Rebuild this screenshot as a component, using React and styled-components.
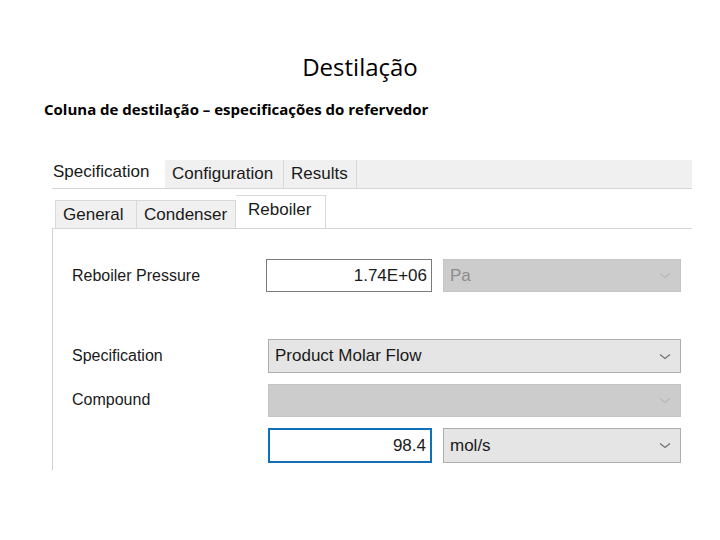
import React from "react";
import styled, { createGlobalStyle } from "styled-components";

const GlobalStyle = createGlobalStyle`
  html, body {
    margin: 0;
    padding: 0;
    background: #ffffff;
  }
`;

const Slide = styled.div`
  width: 720px;
  height: 540px;
  display: flex;
  flex-direction: column;
  background: #ffffff;
  overflow: hidden;
`;

const Title = styled.h1`
  margin: 50px 0 0 0;
  font-family: "Open Sans", sans-serif;
  font-weight: 400;
  font-size: 24px;
  line-height: 34px;
  color: #000;
  text-align: center;
`;

const Subtitle = styled.h2`
  margin: 15px 0 0 44px;
  font-family: "Open Sans", sans-serif;
  font-weight: 700;
  font-size: 15px;
  letter-spacing: 0px;
  line-height: 20px;
  color: #000;
`;

const Dialog = styled.div`
  margin: 41px 0 0 52px;
  width: 640px;
  display: flex;
  flex-direction: column;
  font-family: "Liberation Sans", Arial, sans-serif;
  color: #1a1a1a;
`;

const TabStrip = styled.div`
  display: flex;
  height: 28px;
  padding-left: ${(p) => p.$indent || 0}px;
  margin-top: ${(p) => p.$top || 0}px;
  border-bottom: 1px solid #d6d6d6;
  box-sizing: content-box;
`;

const Tab = styled.div`
  display: flex;
  align-items: center;
  box-sizing: border-box;
  height: ${(p) => (p.$active ? p.$activeHeight || 28 : 28)}px;
  margin-top: ${(p) => (p.$active ? 28 - (p.$activeHeight || 28) : 0)}px;
  width: ${(p) => p.$w}px;
  padding-left: ${(p) => p.$pad || 7}px;
  font-size: 17px;
  background: ${(p) => (p.$active ? "#ffffff" : "#f0f0f0")};
  border-right: 1px solid ${(p) => (p.$active && !p.$bordered ? "transparent" : "#d9d9d9")};
  border-left: ${(p) => (p.$first ? "1px solid #d9d9d9" : "none")};
  border-top: ${(p) => (p.$bordered ? "1px solid #d9d9d9" : "none")};
  margin-bottom: ${(p) => (p.$active ? -1 : 0)}px;
  position: relative;
  z-index: ${(p) => (p.$active ? 1 : 0)};
  padding-bottom: ${(p) => (p.$active ? 4 : 0)}px;
`;

const TopFill = styled.div`
  flex: 1;
  background: #f0f0f0;
`;

const Panel = styled.div`
  box-sizing: border-box;
  height: 241px;
  border-left: 1px solid #cfcfcf;
  padding: 30px 0 0 19px;
  display: grid;
  grid-template-columns: 183px 166px 238px;
  grid-template-rows: 33px 25px 34px 33px 35px;
  column-gap: 11px;
  row-gap: 11px;
  align-items: center;
  align-content: start;
`;

const Label = styled.div`
  font-size: 16px;
  grid-column: 1;
  margin-top: ${(p) => p.$shift || 0}px;
`;

const NumberBox = styled.div`
  box-sizing: border-box;
  height: 100%;
  grid-column: 2;
  display: flex;
  align-items: center;
  justify-content: flex-end;
  padding-right: 4px;
  font-size: 17px;
  background: #ffffff;
  border: ${(p) => (p.$focused ? "2px solid #0f6fb8" : "1px solid #7a7a7a")};
  margin-left: ${(p) => (p.$focused ? 2 : 0)}px;
`;

const Select = styled.div`
  box-sizing: border-box;
  height: 100%;
  grid-column: ${(p) => (p.$wide ? "2 / 4" : "3")};
  margin-left: ${(p) => (p.$wide ? 2 : 0)}px;
  display: flex;
  align-items: center;
  justify-content: space-between;
  padding: 0 9px 0 6px;
  font-size: 17px;
  background: ${(p) => (p.$disabled ? "#cccccc" : "#e5e5e5")};
  border: 1px solid ${(p) => (p.$disabled ? "#c4c4c4" : "#adadad")};
  color: ${(p) => (p.$disabled ? "#8c8c8c" : "#1a1a1a")};
`;

const Spacer = styled.div`
  grid-column: 1 / 4;
`;

const Chevron = ({ faint }) => (
  <svg width="12" height="7" viewBox="0 0 12 7">
    <polyline
      points="1,1.5 6,5.5 11,1.5"
      fill="none"
      stroke={faint ? "#b8b8b8" : "#707070"}
      strokeWidth="1.2"
    />
  </svg>
);

const App = () => (
  <Slide>
    <GlobalStyle />
    <Title>Destilação</Title>
    <Subtitle>Coluna de destilação – especificações do refervedor</Subtitle>
    <Dialog>
      <TabStrip>
        <Tab $active $w={113} $pad={1}>Specification</Tab>
        <Tab $w={119}>Configuration</Tab>
        <Tab $w={73}>Results</Tab>
        <TopFill />
      </TabStrip>
      <TabStrip $indent={3} $top={11}>
        <Tab $w={82} $bordered $first>General</Tab>
        <Tab $w={99} $bordered>Condenser</Tab>
        <Tab $active $bordered $activeHeight={33} $w={90} $pad={12}>
          Reboiler
        </Tab>
      </TabStrip>
      <Panel>
        <Label>Reboiler Pressure</Label>
        <NumberBox>1.74E+06</NumberBox>
        <Select $disabled>
          <span>Pa</span>
          <Chevron faint />
        </Select>
        <Spacer />
        <Label $shift={-1}>Specification</Label>
        <Select $wide>
          <span>Product Molar Flow</span>
          <Chevron />
        </Select>
        <Label $shift={-1}>Compound</Label>
        <Select $wide $disabled>
          <span />
          <Chevron faint />
        </Select>
        <NumberBox $focused>98.4</NumberBox>
        <Select>
          <span>mol/s</span>
          <Chevron />
        </Select>
      </Panel>
    </Dialog>
  </Slide>
);

export default App;
